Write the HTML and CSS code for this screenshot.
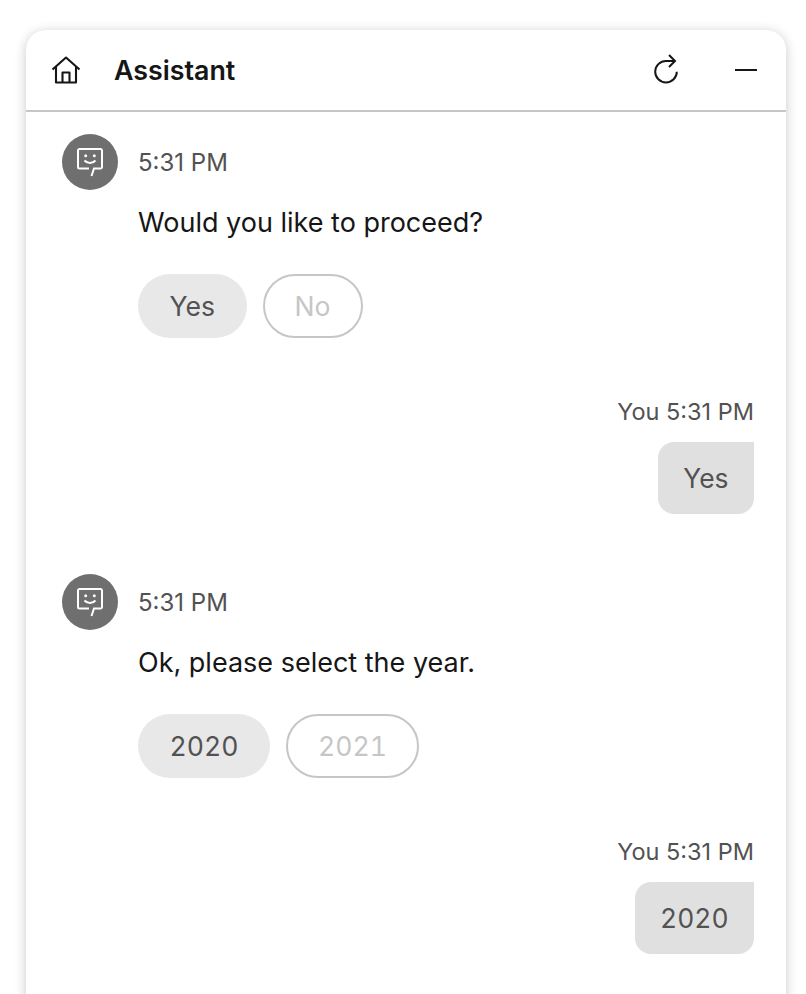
FILE: index.html
```html
<!DOCTYPE html>
<html lang="en">
<head>
<meta charset="utf-8">
<title>Assistant</title>
<link rel="stylesheet" href="styles.css">
</head>
<body>
<main class="card">
  <header class="head">
    <svg class="home" viewBox="0 0 32 32" width="32" height="32" fill="none" stroke="currentColor" stroke-width="2.1" stroke-linejoin="round"><path d="M2.500 15.500 16 3.500l13.500 12"/><path d="M6 12.500V28.500h20V12.500"/><path d="M12.500 28.500V18.500h7v10"/></svg>
    <h1 class="title">Assistant</h1>
    <svg class="restart" viewBox="0 0 32 32" width="32" height="32" fill="none" stroke="currentColor" stroke-width="2"><path d="M26.800 17.700A10.800 10.700 0 1 1 16 7h9"/><path d="M19 1l6 6-6 6"/></svg>
    <span class="minimize"></span>
  </header>
  <section class="log">
    <div class="turn">
      <div class="meta">
        <span class="avatar"><svg viewBox="0 0 32 32" width="32" height="32" fill="none" stroke="#fff" stroke-width="2"><path d="M15 22.500H5.500A1.500 1.500 0 0 1 4 21V4.500A1.500 1.500 0 0 1 5.500 3h21A1.500 1.500 0 0 1 28 4.500V21a1.500 1.500 0 0 1-1.500 1.500H20l-2.500 7.500"/><path d="M10.500 14.500c2.800 3.200 8.200 3.200 11 0"/><circle cx="11.700" cy="9.700" r="1.500" fill="#fff" stroke="none"/><circle cx="20.300" cy="9.700" r="1.500" fill="#fff" stroke="none"/></svg></span>
        <span class="time">5:31 PM</span>
      </div>
      <p class="msg">Would you like to proceed?</p>
      <div class="options"><span class="opt picked">Yes</span><span class="opt muted">No</span></div>
    </div>
    <div class="reply"><span class="time">You 5:31 PM</span><span class="bubble">Yes</span></div>
    <div class="turn">
      <div class="meta">
        <span class="avatar"><svg viewBox="0 0 32 32" width="32" height="32" fill="none" stroke="#fff" stroke-width="2"><path d="M15 22.500H5.500A1.500 1.500 0 0 1 4 21V4.500A1.500 1.500 0 0 1 5.500 3h21A1.500 1.500 0 0 1 28 4.500V21a1.500 1.500 0 0 1-1.500 1.500H20l-2.500 7.500"/><path d="M10.500 14.500c2.800 3.200 8.200 3.200 11 0"/><circle cx="11.700" cy="9.700" r="1.500" fill="#fff" stroke="none"/><circle cx="20.300" cy="9.700" r="1.500" fill="#fff" stroke="none"/></svg></span>
        <span class="time">5:31 PM</span>
      </div>
      <p class="msg">Ok, please select the year.</p>
      <div class="options"><span class="opt picked">2020</span><span class="opt muted">2021</span></div>
    </div>
    <div class="reply"><span class="time">You 5:31 PM</span><span class="bubble">2020</span></div>
  </section>
</main>
</body>
</html>
```
FILE: styles.css
```css
html, body { margin: 0; height: 100%; background: #fff; overflow: hidden; }
body { padding: 30px 20px 0 26px; box-sizing: border-box; font-family: "Inter", "Liberation Sans", sans-serif; color: #161616; }
.card { height: 1000px; border-radius: 20px 20px 0 0; background: #fff; box-shadow: 0 2px 12px rgba(0,0,0,.22); }
.head { height: 80px; border-bottom: 2px solid #c6c6c6; display: flex; align-items: center; padding: 0 24px; color: #161616; }
.home { flex: none; }
.title { margin: 0 0 0 32px; flex: 1; font-size: 26.800px; font-weight: 600; line-height: 36px; }
.restart { flex: none; margin-right: 53px; }
.minimize { width: 22px; height: 2px; background: #161616; margin-right: 5px; }
.log { padding: 22px 32px 0 36px; }
.turn { display: flex; flex-direction: column; }
.meta { display: flex; align-items: center; gap: 20px; height: 56px; }
.meta .time { margin-top: 2px; }
.avatar { width: 56px; height: 56px; border-radius: 50%; background: #6f6f6f; display: flex; align-items: center; justify-content: center; }
.time { font-size: 24px; line-height: 32px; color: #525252; }
.msg { margin: 15px 0 0 76px; font-size: 27px; line-height: 36px; }
.options { display: flex; gap: 16px; margin: 33px 0 0 76px; }
.opt { height: 64px; box-sizing: border-box; border-radius: 32px; padding: 0 31.500px; display: flex; align-items: center; font-size: 26.600px; font-variant-numeric: tabular-nums; }
.picked { background: #e8e8e8; color: #525252; }
.muted { border: 2px solid #c6c6c6; color: #c6c6c6; padding: 0 30px; }
.reply { display: flex; flex-direction: column; align-items: flex-end; margin: 58px 0 60px; }
.reply .time { font-size: 23.500px; }
.bubble { margin-top: 14px; height: 72px; box-sizing: border-box; padding: 0 25.500px; display: flex; align-items: center; background: #e0e0e0; border-radius: 16px 0 16px 16px; font-size: 26.400px; font-variant-numeric: tabular-nums; color: #525252; }
```
